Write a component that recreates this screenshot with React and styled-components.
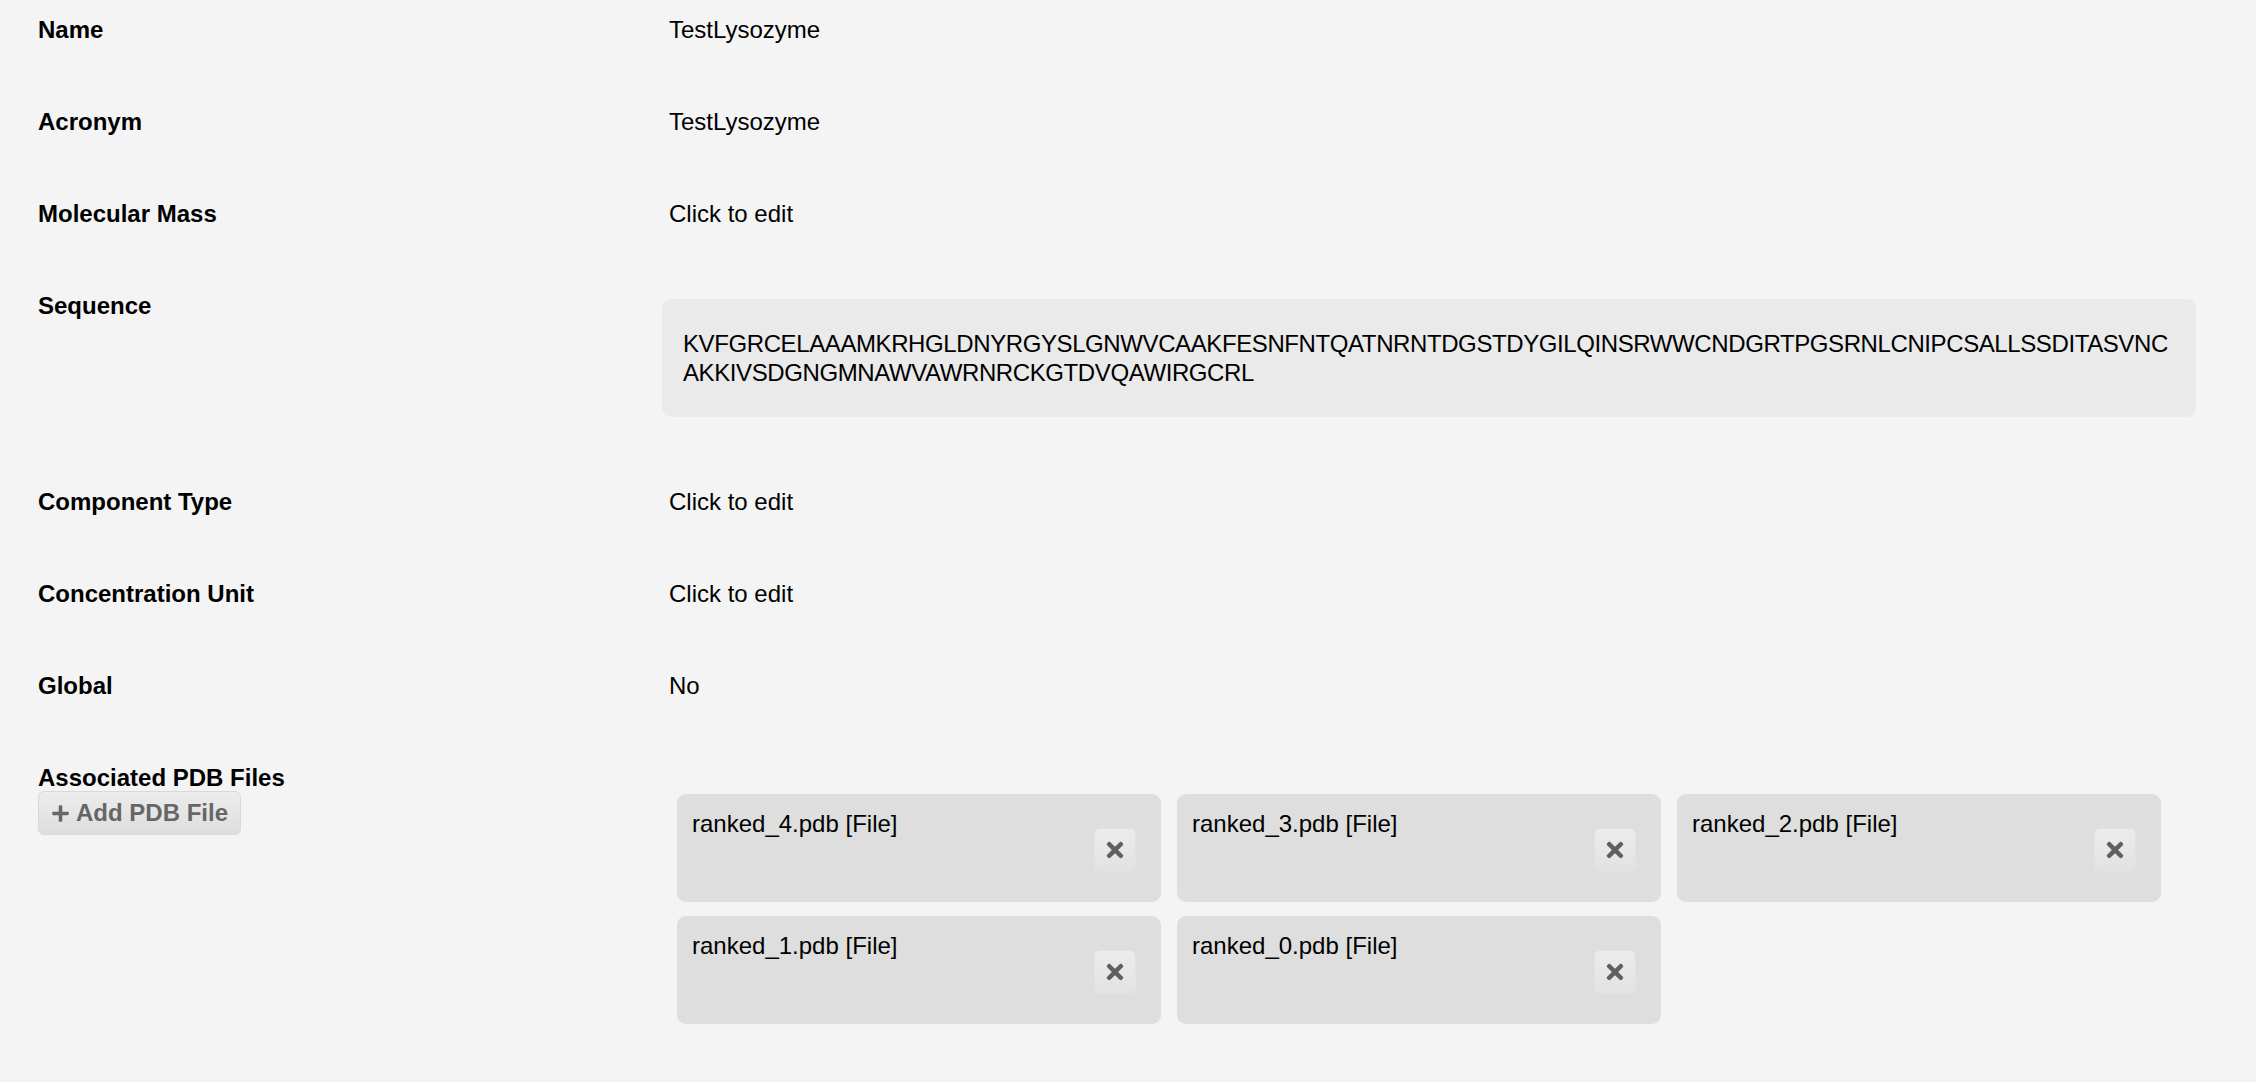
import React from "react";
import styled, { createGlobalStyle } from "styled-components";
import { FaPlus, FaTimes } from "react-icons/fa";

const GlobalStyle = createGlobalStyle`
  html, body {
    margin: 0;
    padding: 0;
    background: #f4f4f4;
  }
  body {
    font-family: "Liberation Sans", Helvetica, Arial, sans-serif;
    font-size: 24px;
    line-height: 29px;
    color: #000;
  }
`;

const Page = styled.div`
  padding: 15px 60px 58px 38px;
`;

const Row = styled.div`
  display: grid;
  grid-template-columns: 624px 1534px;
  padding-bottom: ${(p) => (p.last ? "0" : "63px")};
`;

const Label = styled.div`
  font-weight: bold;
`;

const Value = styled.div`
  padding-left: 7px;
`;

const SequenceBox = styled.div`
  margin: 8px 0 7px;
  padding: 30px 21px;
  background: #eaeaea;
  border-radius: 9px;
  word-break: break-all;
  letter-spacing: -0.4px;
`;

const AddButton = styled.button`
  display: flex;
  align-items: center;
  gap: 6px;
  margin-top: -1px;
  height: 44px;
  padding: 0 12px;
  border: 1px solid #d9d9d9;
  border-radius: 6px;
  background: linear-gradient(#ececec, #dedede);
  color: #666;
  font-family: inherit;
  font-size: 24px;
  font-weight: bold;
  cursor: pointer;

  svg {
    width: 19px;
    height: 19px;
  }
`;

const FileGrid = styled.div`
  display: flex;
  flex-wrap: wrap;
  gap: 14px 16px;
  margin-top: 31px;
  padding-left: 15px;
`;

const FileCard = styled.div`
  display: flex;
  justify-content: space-between;
  align-items: flex-start;
  box-sizing: border-box;
  width: 484px;
  height: 108px;
  padding: 15px 25px 0 15px;
  background: #dedede;
  border-radius: 9px;
`;

const RemoveButton = styled.button`
  display: flex;
  align-items: center;
  justify-content: center;
  width: 42px;
  height: 44px;
  margin-top: 19px;
  padding: 0;
  border: 1px solid #e2e2e2;
  border-radius: 6px;
  background: linear-gradient(#ececec, #e2e2e2);
  color: #5f5f5f;
  cursor: pointer;

  svg {
    width: 24px;
    height: 24px;
  }
`;

const fields = [
  ["Name", "TestLysozyme"],
  ["Acronym", "TestLysozyme"],
  ["Molecular Mass", "Click to edit"],
];

const fields2 = [
  ["Component Type", "Click to edit"],
  ["Concentration Unit", "Click to edit"],
  ["Global", "No"],
];

const sequence =
  "KVFGRCELAAAMKRHGLDNYRGYSLGNWVCAAKFESNFNTQATNRNTDGSTDYGILQINSRWWCNDGRTPGSRNLCNIPCSALLSSDITASVNCAKKIVSDGNGMNAWVAWRNRCKGTDVQAWIRGCRL";

const files = ["ranked_4.pdb", "ranked_3.pdb", "ranked_2.pdb", "ranked_1.pdb", "ranked_0.pdb"];

export default function App() {
  return (
    <Page>
      <GlobalStyle />
      {fields.map(([label, value]) => (
        <Row key={label}>
          <Label>{label}</Label>
          <Value>{value}</Value>
        </Row>
      ))}
      <Row>
        <Label>Sequence</Label>
        <SequenceBox>{sequence}</SequenceBox>
      </Row>
      {fields2.map(([label, value]) => (
        <Row key={label}>
          <Label>{label}</Label>
          <Value>{value}</Value>
        </Row>
      ))}
      <Row last>
        <div>
          <Label>Associated PDB Files</Label>
          <div>
            <AddButton>
              <FaPlus />
              Add PDB File
            </AddButton>
          </div>
        </div>
        <FileGrid>
          {files.map((f) => (
            <FileCard key={f}>
              <span>{f} [File]</span>
              <RemoveButton>
                <FaTimes />
              </RemoveButton>
            </FileCard>
          ))}
        </FileGrid>
      </Row>
    </Page>
  );
}
